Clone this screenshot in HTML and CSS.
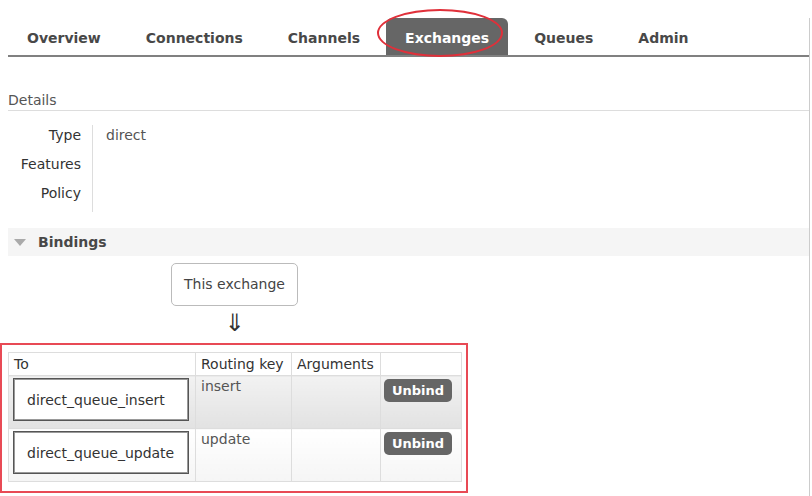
FILE: index.html
```html
<!DOCTYPE html>
<html>
<head>
<meta charset="utf-8">
<link rel="stylesheet" href="styles.css">
</head>
<body>
<div class="page">
  <ul class="tabs">
    <li class="tab">Overview</li>
    <li class="tab">Connections</li>
    <li class="tab">Channels</li>
    <li class="tab active">Exchanges</li>
    <li class="tab">Queues</li>
    <li class="tab">Admin</li>
  </ul>

  <section class="details">
    <h2 class="section-title">Details</h2>
    <div class="facts">
      <div class="fact-labels">
        <div class="fact-label">Type</div>
        <div class="fact-label">Features</div>
        <div class="fact-label">Policy</div>
      </div>
      <div class="fact-values">
        <div class="fact-value">direct</div>
        <div class="fact-value"></div>
        <div class="fact-value"></div>
      </div>
    </div>
  </section>

  <section class="bindings">
    <h2 class="bindings-title"><span class="tri"></span>Bindings</h2>
    <div class="flow">
      <div class="this-exchange">This exchange</div>
      <div class="arrow">&#8659;</div>
    </div>
    <table class="bind-table">
      <thead>
        <tr>
          <th class="c-to">To</th>
          <th class="c-key">Routing key</th>
          <th class="c-args">Arguments</th>
          <th class="c-btn"></th>
        </tr>
      </thead>
      <tbody>
        <tr class="alt1">
          <td><span class="queue">direct_queue_insert</span></td>
          <td>insert</td>
          <td></td>
          <td class="btn-cell"><span class="btn">Unbind</span></td>
        </tr>
        <tr class="alt2">
          <td><span class="queue">direct_queue_update</span></td>
          <td>update</td>
          <td></td>
          <td class="btn-cell"><span class="btn">Unbind</span></td>
        </tr>
      </tbody>
    </table>
  </section>
</div>
<div class="mark-ellipse"></div>
<div class="mark-rect"></div>
</body>
</html>
```

FILE: styles.css
```css
html, body {
  margin: 0;
  padding: 0;
  background: #fff;
}
body {
  font-family: "DejaVu Sans", Verdana, sans-serif;
  font-size: 14px;
  color: #484848;
  position: relative;
  width: 812px;
  height: 496px;
  overflow: hidden;
}
.page {
  margin-left: 8px;
  width: 801px;
  height: 496px;
  border-right: 1px solid #ccc;
}
.tabs {
  list-style: none;
  margin: 18px 0 0 0;
  padding: 0;
  display: flex;
  gap: 7px;
  border-bottom: 2px solid #808080;
  height: 37px;
}
.tab {
  padding: 3px 19px 0 19px;
  font-weight: bold;
  font-size: 14px;
  line-height: 34px;
  color: #484848;
  border-radius: 6px 6px 0 0;
}
.tab.active {
  background: #666;
  color: #fff;
}
.section-title {
  margin: 35px 0 0 0;
  font-size: 14px;
  font-weight: normal;
  color: #555;
  line-height: 17px;
  padding-bottom: 1px;
  border-bottom: 1px solid #ddd;
}
.facts {
  display: flex;
  margin-top: 14px;
}
.fact-labels {
  width: 84px;
  text-align: right;
  border-right: 1px solid #ddd;
}
.fact-label, .fact-value {
  height: 29px;
  line-height: 20px;
  color: #333;
}
.fact-label {
  padding-right: 11px;
}
.fact-values {
  padding-left: 13px;
}
.fact-value {
  color: #555;
}
.bindings-title {
  margin: 16px 0 0 0;
  height: 28px;
  background: #f5f5f5;
  font-size: 14px;
  font-weight: bold;
  line-height: 28px;
  color: #484848;
  display: flex;
  align-items: center;
}
.tri {
  width: 0;
  height: 0;
  border-left: 6px solid transparent;
  border-right: 6px solid transparent;
  border-top: 7px solid #aaa;
  margin: 0 12px 0 6px;
}
.flow {
  display: flex;
  flex-direction: column;
  align-items: center;
  width: 453px;
  margin-top: 7px;
}
.this-exchange {
  border: 1px solid #bbb;
  border-radius: 5px;
  height: 41px;
  line-height: 41px;
  color: #444;
  width: 125px;
  text-align: center;
}
.arrow {
  font-size: 24px;
  line-height: 28px;
  margin-top: 3px;
  color: #333;
}
.bind-table {
  margin-top: 15px;
  border-collapse: collapse;
  width: 454px;
  border: 1px solid #ddd;
}
.bind-table th {
  font-weight: normal;
  text-align: left;
  height: 22px;
  padding: 0 5px;
  color: #333;
  border: 1px solid #ddd;
}
.bind-table td {
  border: 1px solid #ddd;
  vertical-align: top;
  padding: 2px 5px;
  height: 48px;
  color: #555;
}
.bind-table td:first-child {
  padding: 2px 5px 0 4px;
}
.bind-table td.btn-cell {
  padding: 3px 4px 1px 3px;
}
.c-to { width: 176px; }
.c-key { width: 85px; }
.c-args { width: 78px; }
.alt1 td {
  background: linear-gradient(#f2f2f2, #e2e2e2);
}
.alt2 td {
  background: linear-gradient(#ffffff, #f5f5f5);
}
.queue {
  display: block;
  width: 176px;
  height: 43px;
  line-height: 42px;
  border: 1px solid #555;
  background: #fff;
  padding-left: 13px;
  box-sizing: border-box;
  color: #333;
  box-shadow: inset 0 0 0 1px #999;
}
.btn {
  display: inline-block;
  background: #666;
  color: #fff;
  font-weight: bold;
  font-size: 13px;
  border-radius: 5px;
  padding: 0 8px;
  height: 23px;
  line-height: 23px;
}
.mark-ellipse {
  position: absolute;
  left: 377px;
  top: 9px;
  width: 126px;
  height: 48px;
  border: 2px solid #e0303a;
  border-radius: 50%;
  box-sizing: border-box;
}
.mark-rect {
  position: absolute;
  left: 0;
  top: 343px;
  width: 468px;
  height: 150px;
  border: 2px solid #e84a55;
  box-sizing: border-box;
}
```
